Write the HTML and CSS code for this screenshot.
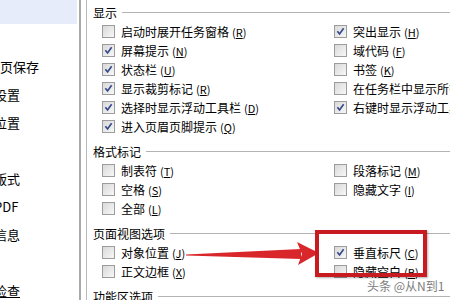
FILE: index.html
```html
<!DOCTYPE html>
<html lang="zh-CN">
<head>
    <meta charset="UTF-8" />
    <title>选项 - 视图</title>
    <link rel="stylesheet" href="styles.css">
</head>
<body>

<div class="nav">
    <div class="nav-item selected"></div>
    <div class="nav-item"></div>
    <div class="nav-item">页保存</div>
    <div class="nav-item cut">设置</div>
    <div class="nav-item cut">位置</div>
    <div class="nav-item"></div>
    <div class="nav-item cut">版式</div>
    <div class="nav-item cut">PDF</div>
    <div class="nav-item cut">信息</div>
    <div class="nav-item"></div>
    <div class="nav-item cut link">检查</div>
</div>

<div class="gap"></div>

<div class="panel">
    <div class="section">
        <div class="title">显示</div>
        <div class="rows">
            <label class="opt"><span class="box"></span>启动时展开任务窗格 <span class="key">(<u>R</u>)</span></label>
            <label class="opt"><span class="box on"><svg viewBox="0 0 13 13"><path d="M2.8 6.2 L5.4 9.4 L10.2 2.8"/></svg></span>突出显示 <span class="key">(<u>H</u>)</span></label>
            <label class="opt"><span class="box on"><svg viewBox="0 0 13 13"><path d="M2.8 6.2 L5.4 9.4 L10.2 2.8"/></svg></span>屏幕提示 <span class="key">(<u>N</u>)</span></label>
            <label class="opt"><span class="box"></span>域代码 <span class="key">(<u>F</u>)</span></label>
            <label class="opt"><span class="box on"><svg viewBox="0 0 13 13"><path d="M2.8 6.2 L5.4 9.4 L10.2 2.8"/></svg></span>状态栏 <span class="key">(<u>U</u>)</span></label>
            <label class="opt"><span class="box"></span>书签 <span class="key">(<u>K</u>)</span></label>
            <label class="opt"><span class="box on"><svg viewBox="0 0 13 13"><path d="M2.8 6.2 L5.4 9.4 L10.2 2.8"/></svg></span>显示裁剪标记 <span class="key">(<u>R</u>)</span></label>
            <label class="opt"><span class="box"></span>在任务栏中显示所有窗口</label>
            <label class="opt"><span class="box on"><svg viewBox="0 0 13 13"><path d="M2.8 6.2 L5.4 9.4 L10.2 2.8"/></svg></span>选择时显示浮动工具栏 <span class="key">(<u>D</u>)</span></label>
            <label class="opt"><span class="box on"><svg viewBox="0 0 13 13"><path d="M2.8 6.2 L5.4 9.4 L10.2 2.8"/></svg></span>右键时显示浮动工具栏</label>
            <label class="opt"><span class="box on"><svg viewBox="0 0 13 13"><path d="M2.8 6.2 L5.4 9.4 L10.2 2.8"/></svg></span>进入页眉页脚提示 <span class="key">(<u>Q</u>)</span></label>
        </div>
    </div>

    <div class="section">
        <div class="title">格式标记</div>
        <div class="rows">
            <label class="opt"><span class="box"></span>制表符 <span class="key">(<u>T</u>)</span></label>
            <label class="opt"><span class="box"></span>段落标记 <span class="key">(<u>M</u>)</span></label>
            <label class="opt"><span class="box"></span>空格 <span class="key">(<u>S</u>)</span></label>
            <label class="opt"><span class="box"></span>隐藏文字 <span class="key">(<u>I</u>)</span></label>
            <label class="opt"><span class="box"></span>全部 <span class="key">(<u>L</u>)</span></label>
        </div>
    </div>

    <div class="section">
        <div class="title">页面视图选项</div>
        <div class="rows">
            <label class="opt"><span class="box"></span>对象位置 <span class="key">(<u>J</u>)</span></label>
            <label class="opt"><span class="box on"><svg viewBox="0 0 13 13"><path d="M2.8 6.2 L5.4 9.4 L10.2 2.8"/></svg></span>垂直标尺 <span class="key">(<u>C</u>)</span></label>
            <label class="opt"><span class="box"></span>正文边框 <span class="key">(<u>X</u>)</span></label>
            <label class="opt"><span class="box"></span>隐藏空白 <span class="key">(<u>B</u>)</span></label>
        </div>
    </div>

    <div class="section">
        <div class="title">功能区选项</div>
    </div>
</div>

<!-- annotation drawn over the dialog -->
<svg class="arrow" viewBox="0 0 450 300">
    <polygon points="186,254.5 301,249 301,259 186,255.5" fill="#d8262b"/>
    <polygon points="297,242 319,253 298,265 302,254" fill="#d8262b"/>
</svg>
<div class="highlight"></div>
<div class="watermark">头条 @从N到1</div>

</body>
</html>
```

FILE: styles.css
```css
body {
    margin: 0;
    width: 450px;
    height: 300px;
    overflow: hidden;
    display: flex;
    background-color: #fff;
    font-family: "Noto Sans CJK SC", "Liberation Sans", sans-serif;
    color: #000;
    position: relative;
}
.nav {
    width: 79px;
    flex-shrink: 0;
    border-right: 2px solid #a9a9a9;
    overflow: hidden;
    margin-top: -2px;
}
.nav-item {
    height: 26px;
    line-height: 26px;
    margin-bottom: 2px;
    margin-right: 2px;
    font-size: 13px;
    white-space: nowrap;
}
.nav-item.selected {
    background-color: #e6ecf9;
}
.nav-item.cut {
    text-indent: -6px;
}
.nav-item.link {
    text-decoration: underline;
}
.gap {
    width: 5px;
    flex-shrink: 0;
}
.panel {
    flex: 1;
    border-left: 1px solid #b9b9b9;
    padding: 2px 0 0 6px;
    overflow: hidden;
}
.section {
    margin-bottom: 5px;
}
.title {
    display: flex;
    align-items: center;
    height: 20px;
    font-size: 12px;
    white-space: nowrap;
}
.title::after {
    content: "";
    flex: 1;
    margin-left: 5px;
    border-top: 1px solid #b3b3b3;
}
.rows {
    display: grid;
    grid-template-columns: 232px 1fr;
    padding-left: 9px;
}
.opt {
    display: flex;
    align-items: center;
    height: 19px;
    font-size: 12px;
    white-space: nowrap;
    overflow: hidden;
}
.box {
    width: 11px;
    height: 11px;
    flex-shrink: 0;
    margin-right: 6px;
    border: 1px solid #9c9c9c;
    background: linear-gradient(135deg, #d9d9d9, #f7f7f7);
}
.box svg {
    display: block;
    width: 11px;
    height: 11px;
}
.box svg path {
    fill: none;
    stroke: #34498a;
    stroke-width: 2;
}
.key {
    font-size: 11px;
    margin-left: 3px;
}
.arrow {
    position: absolute;
    left: 0;
    top: 0;
    width: 450px;
    height: 300px;
}
.highlight {
    position: absolute;
    left: 315px;
    top: 230px;
    width: 104px;
    height: 39px;
    border: 4px solid #c71b21;
    box-shadow: 1px 1px 2px rgba(0,0,0,0.3);
}
.watermark {
    position: absolute;
    left: 367px;
    top: 277px;
    font-size: 12px;
    color: #7d7d7d;
    text-shadow: 0 0 2px #fff, 0 0 2px #fff;
    white-space: nowrap;
}
```
